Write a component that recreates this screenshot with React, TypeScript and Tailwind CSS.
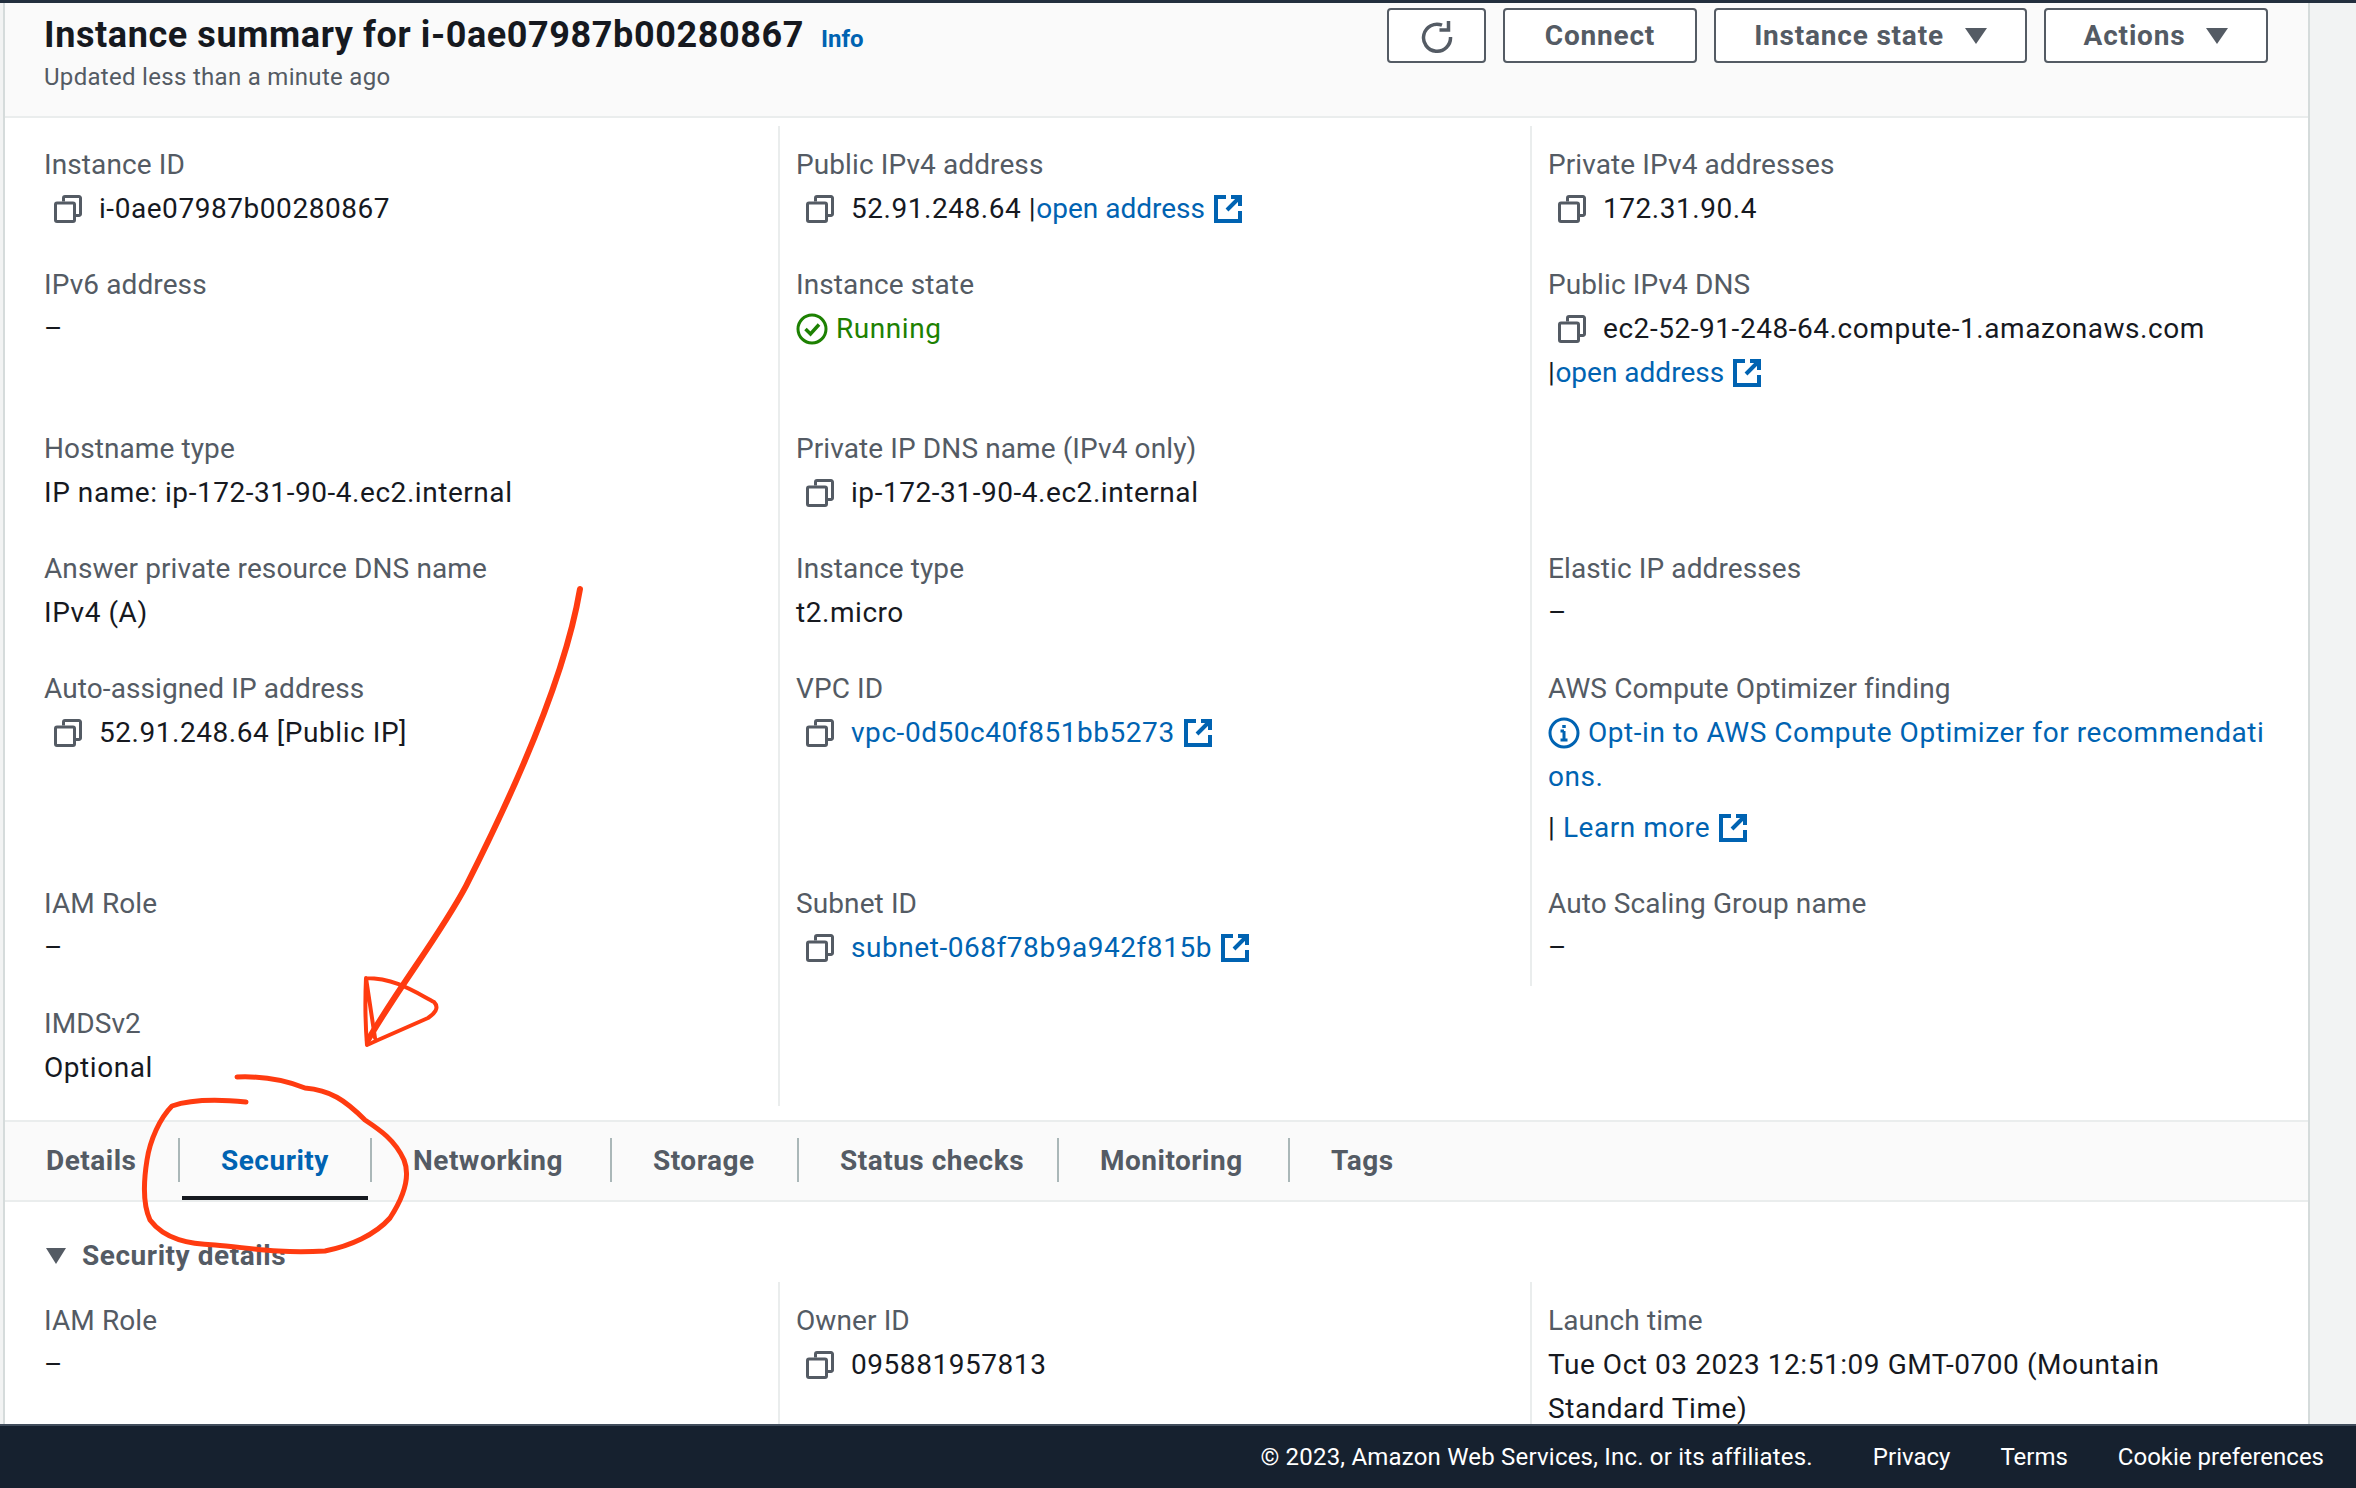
import React from "react";

const font = "font-['Roboto','Liberation_Sans',sans-serif]";

const CopyIcon = () => (
  <svg viewBox="0 0 28 28" className="w-[28px] h-[28px] shrink-0 fill-none stroke-[#545b64] stroke-[3]">
    <path d="M9.5 6.5V3a1.5 1.5 0 0 1 1.5-1.5h14a1.5 1.5 0 0 1 1.5 1.5v16a1.5 1.5 0 0 1-1.5 1.5h-3.5" />
    <rect x="1.5" y="8" width="19" height="18.5" rx="1.5" />
  </svg>
);

const ExternalIcon = () => (
  <svg viewBox="0 0 28 28" className="inline-block w-[28px] h-[28px] align-[-5px] ml-[9px] fill-none stroke-[#0063b2] stroke-[4]">
    <path d="M12 2H2v24h24V16" />
    <path d="M17 2h9v9M26 2 13 15" />
  </svg>
);

const Caret = () => (
  <svg viewBox="0 0 22 16" className="w-[22px] h-[16px] fill-[#545b64]">
    <path d="M0 0h22L11 16z" />
  </svg>
);

const A = ({ children, plain }: { children: React.ReactNode; plain?: boolean }) => (
  <span className={`text-[#0063b2] ${plain ? "tracking-normal" : ""}`}>
    {children}
    <ExternalIcon />
  </span>
);

const Copy = ({ children }: { children: React.ReactNode }) => (
  <div className="flex items-center pl-[10px] gap-[17px]">
    <CopyIcon />
    <span>{children}</span>
  </div>
);

const Label = ({ children, top }: { children: React.ReactNode; top?: boolean }) => (
  <div className={`text-[#545b64] tracking-[0.1px] ${top ? "pt-[17px]" : ""}`}>{children}</div>
);

const Field = ({
  label,
  children,
  first,
  last,
  top,
  short,
}: {
  label?: string;
  children?: React.ReactNode;
  first?: boolean;
  last?: boolean;
  top?: boolean;
  short?: boolean;
}) => (
  <div className={`${first ? "pl-[39px]" : "pl-[16px] border-l-2 border-[#eaeded]"} ${last || short ? "pb-[16px]" : "pb-[32px]"} ${short ? "self-start" : ""} pr-[36px]`}>
    {label && <Label top={top}>{label}</Label>}
    <div className="text-[#16191f] tracking-[0.55px]">{children}</div>
  </div>
);

const Button = ({ children, className }: { children: React.ReactNode; className: string }) => (
  <button className={`h-[55px] flex items-center justify-center gap-[21px] border-2 border-[#545b64] rounded-[4px] bg-white font-bold tracking-[0.8px] text-[#545b64] ${className}`}>
    {children}
  </button>
);

const tabs = [
  { name: "Details", width: "w-[173px]" },
  { name: "Security", width: "w-[192px]" },
  { name: "Networking", width: "w-[240px]" },
  { name: "Storage", width: "w-[187px]" },
  { name: "Status checks", width: "w-[260px]" },
  { name: "Monitoring", width: "w-[231px]" },
  { name: "Tags", width: "w-[150px]" },
];

export default function App() {
  return (
    <div className={`${font} h-[1488px] w-[2356px] overflow-hidden flex flex-col relative bg-[#f2f3f3] text-[28px] leading-[44px]`}>
      <div className="h-[3px] bg-[#232f3e] shrink-0" />
      <div className="flex-1 min-h-0 overflow-hidden w-[2307px] ml-[3px] border-x-2 border-[#d5dbdb] bg-white">
        {/* header */}
        <div className="h-[115px] bg-[#fafafa] border-b-2 border-[#eaeded] pl-[39px] pr-[40px] pt-[5px] flex justify-between">
          <div>
            <div className="flex items-baseline h-[54px] leading-[54px]">
              <h1 className="text-[36px] font-bold tracking-[0.6px] text-[#16191f]">Instance summary for i-0ae07987b00280867</h1>
              <span className="ml-[17px] text-[24px] font-bold text-[#0063b2]">Info</span>
            </div>
            <p className="text-[24px] leading-[30px] tracking-[0.3px] text-[#545b64]">Updated less than a minute ago</p>
          </div>
          <div className="flex gap-[17px]">
            <Button className="w-[99px]">
              <svg viewBox="0 0 32 32" className="w-[32px] h-[34px] fill-none stroke-[#545b64] stroke-[3.5]">
                <path d="M21 5.2A13.5 13.5 0 1 0 29.5 17" />
                <path d="M27.5 1v9h-9" />
              </svg>
            </Button>
            <Button className="w-[194px]">Connect</Button>
            <Button className="w-[313px]">
              Instance state <Caret />
            </Button>
            <Button className="w-[224px]">
              Actions <Caret />
            </Button>
          </div>
        </div>

        {/* summary */}
        <div className="grid grid-cols-[773px_752px_1fr] mt-[8px]">
          <Field first top label="Instance ID"><Copy>i-0ae07987b00280867</Copy></Field>
          <Field top label="Public IPv4 address"><Copy>52.91.248.64 |<A plain>open address</A></Copy></Field>
          <Field top label="Private IPv4 addresses"><Copy>172.31.90.4</Copy></Field>

          <Field first label="IPv6 address">–</Field>
          <Field label="Instance state">
            <div className="flex items-center gap-[8px] text-[#1d8102]">
              <svg viewBox="0 0 32 32" className="w-[32px] h-[32px] fill-none stroke-[#1d8102] stroke-[3]">
                <circle cx="16" cy="16" r="14" />
                <path d="m9.5 16 5 5 8.5-9.5" strokeWidth="3.5" />
              </svg>
              Running
            </div>
          </Field>
          <Field label="Public IPv4 DNS">
            <Copy>ec2-52-91-248-64.compute-1.amazonaws.com</Copy>
            <div>|<A plain>open address</A></div>
          </Field>

          <Field first label="Hostname type">IP name: ip-172-31-90-4.ec2.internal</Field>
          <Field label="Private IP DNS name (IPv4 only)"><Copy>ip-172-31-90-4.ec2.internal</Copy></Field>
          <Field />

          <Field first label="Answer private resource DNS name">IPv4 (A)</Field>
          <Field label="Instance type">t2.micro</Field>
          <Field label="Elastic IP addresses">–</Field>

          <Field first label="Auto-assigned IP address"><Copy>52.91.248.64 [Public IP]</Copy></Field>
          <Field label="VPC ID"><Copy><A>vpc-0d50c40f851bb5273</A></Copy></Field>
          <Field label="AWS Compute Optimizer finding">
            <div className="break-all text-[#0063b2]">
              <svg viewBox="0 0 32 32" className="inline-block w-[32px] h-[32px] align-[-7px] mr-[8px] fill-none stroke-[#0063b2] stroke-[3]">
                <circle cx="16" cy="16" r="14" />
                <path d="M16 14v9M12.5 23h7M12.5 14H16" />
                <path d="M16 8v3" strokeWidth="3.5" />
              </svg>
              Opt-in to AWS Compute Optimizer for recommendations.
            </div>
            <div className="mt-[7px]">| <A>Learn more</A></div>
          </Field>

          <Field first label="IAM Role">–</Field>
          <Field label="Subnet ID"><Copy><A>subnet-068f78b9a942f815b</A></Copy></Field>
          <Field short label="Auto Scaling Group name">–</Field>

          <Field first last label="IMDSv2">Optional</Field>
          <Field last />
        </div>

        {/* tabs */}
        <div className="mt-[14px] h-[82px] bg-[#fafafa] border-y-2 border-[#eaeded] flex items-start pt-[16px]">
          {tabs.map((t, i) => (
            <div
              key={t.name}
              className={`relative h-[44px] pl-[41px] pt-[1px] font-bold tracking-[0.5px] ${t.width} ${i > 0 ? "border-l-2 border-[#aab7b8]" : ""} ${t.name === "Security" ? "text-[#0063b2]" : "text-[#545b64]"}`}
            >
              {t.name}
              {t.name === "Security" && <div className="absolute left-[2px] right-[2px] top-[58px] h-[4px] bg-[#16191f]" />}
            </div>
          ))}
        </div>

        {/* security details */}
        <div className="pl-[39px] pt-[32px] mb-[4px] flex items-center gap-[16px] font-bold tracking-[0.55px] text-[#545b64]">
          <svg viewBox="0 0 20 16" className="ml-[2px] w-[20px] h-[16px] fill-[#545b64]"><path d="M0 0h20L10 16z" /></svg>
          Security details
        </div>
        <div className="grid grid-cols-[773px_752px_1fr]">
          <Field first top label="IAM Role">–</Field>
          <Field top label="Owner ID"><Copy>095881957813</Copy></Field>
          <Field top label="Launch time">Tue Oct 03 2023 12:51:09 GMT-0700 (Mountain Standard Time)</Field>
        </div>
      </div>

      {/* footer */}
      <footer className="h-[64px] shrink-0 bg-[#16212f] border-t-2 border-[#414d5c] pr-[32px] flex items-center justify-end text-[24px] text-white">
        <span className="mr-[60px] tracking-[0.2px]">© 2023, Amazon Web Services, Inc. or its affiliates.</span>
        <span className="mr-[50px]">Privacy</span>
        <span className="mr-[50px]">Terms</span>
        <span>Cookie preferences</span>
      </footer>

      {/* hand drawn annotation */}
      <svg viewBox="0 0 2356 1488" className="absolute inset-0 w-[2356px] h-[1488px] pointer-events-none fill-none stroke-[#ff3b10] stroke-[5]" strokeLinecap="round" strokeLinejoin="round">
        <path d="M580 589C568 660 530 760 466 886C440 935 400 985 368 1040" strokeWidth="6" />
        <path d="M366 978C395 978 415 992 434 1002C440 1008 434 1014 428 1018L378 1040L367 1045C365 1020 365 1000 366 978L375 1038" strokeWidth="4" />
        <path d="M246 1102C225 1100 195 1098 172 1106C160 1118 150 1140 147 1160C143 1185 143 1205 150 1220C165 1240 190 1244 215 1245C245 1247 275 1254 325 1251C350 1246 375 1235 390 1218C405 1195 410 1175 404 1160C395 1140 380 1130 365 1120C345 1100 330 1090 305 1088C285 1080 260 1076 237 1077" />
      </svg>
    </div>
  );
}
